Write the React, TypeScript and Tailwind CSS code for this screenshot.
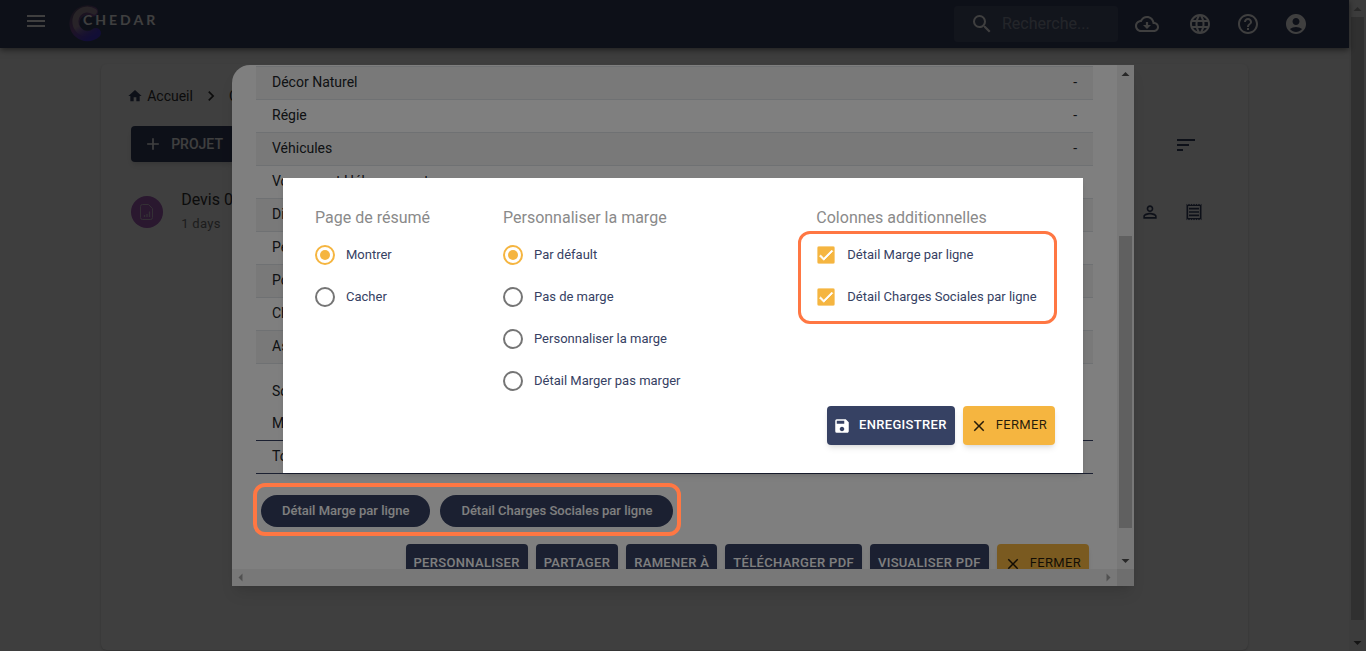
import { useState } from 'react';
import type { ReactNode } from 'react';
import {
  MdAccountCircle,
  MdAdd,
  MdCheck,
  MdChevronRight,
  MdClose,
  MdHelpOutline,
  MdHome,
  MdLanguage,
  MdMenu,
  MdOutlineReceipt,
  MdPersonOutline,
  MdSave,
  MdSearch,
  MdSort,
} from 'react-icons/md';

const rows = [
  'Décor Naturel',
  'Régie',
  'Véhicules',
  'Voyages et Hébergements',
  'Divers',
  'Personnel',
  'Postproduction',
  'Charges',
  'Assurances',
];

const actions = ['PERSONNALISER', 'PARTAGER', 'RAMENER À', 'TÉLÉCHARGER PDF', 'VISUALISER PDF'];

const summaryOptions = ['Montrer', 'Cacher'];
const marginOptions = ['Par défault', 'Pas de marge', 'Personnaliser la marge', 'Détail Marger pas marger'];
const columnOptions = ['Détail Marge par ligne', 'Détail Charges Sociales par ligne'];

function Logo() {
  return (
    <a href="#" className="flex items-center">
      <svg width="40" height="40" viewBox="0 0 40 40" fill="none" strokeLinecap="round" aria-hidden="true">
        <defs>
          <linearGradient id="ring" x1="0.2" y1="0" x2="0.8" y2="1">
            <stop offset="0" stopColor="#5c4c70" />
            <stop offset="0.45" stopColor="#7d4f96" />
            <stop offset="1" stopColor="#4a38d8" />
          </linearGradient>
          <linearGradient id="ringInner" x1="0.3" y1="0" x2="0.8" y2="1">
            <stop offset="0" stopColor="#a0929c" />
            <stop offset="0.5" stopColor="#a08ca4" />
            <stop offset="1" stopColor="#5a48d0" stopOpacity="0.2" />
          </linearGradient>
        </defs>
        <path d="M29 9.500A13 13 0 1 0 32 31" stroke="url(#ring)" strokeWidth="10" />
        <path d="M30 9.500A12 12 0 1 0 30 29.500" stroke="url(#ringInner)" strokeWidth="6" />
      </svg>
      <span className="-mt-1 -ml-[21px] font-[Lato,sans-serif] text-sm font-bold tracking-[3px] text-white">CHEDAR</span>
    </a>
  );
}

function CloudDownloadIcon() {
  return (
    <svg width="24" height="24" viewBox="0 0 24 24" fill="currentColor" aria-hidden="true">
      <path d="M19.35 10.04C18.67 6.59 15.64 4 12 4 9.11 4 6.6 5.64 5.35 8.04 2.34 8.36 0 10.91 0 14c0 3.31 2.69 6 6 6h13c2.76 0 5-2.24 5-5 0-2.64-2.05-4.78-4.65-4.96zM19 18H6c-2.21 0-4-1.79-4-4 0-2.05 1.53-3.76 3.56-3.97l1.07-.11.5-.95C8.08 7.14 9.94 6 12 6c2.62 0 4.88 1.86 5.39 4.43l.3 1.5 1.53.11c1.56.1 2.78 1.41 2.78 2.96 0 1.65-1.35 3-3 3z" />
      <path d="M10.9 10h2.2v3H16l-4 4-4-4h2.900z" />
    </svg>
  );
}

function DocumentIcon() {
  return (
    <svg width="18" height="18" viewBox="0 0 18 18" fill="none" stroke="#d0c0d4" aria-hidden="true">
      <path d="M4.5 1.5h6l4 4v9a2 2 0 0 1-2 2h-8a2 2 0 0 1-2-2v-11a2 2 0 0 1 2-2z" />
      <path d="M6.5 14v-2M9 14v-3M11.500 14V8.500" strokeWidth="1.300" />
    </svg>
  );
}

function Arrow({ className, points }: { className: string; points: string }) {
  return (
    <svg className={className} width="17" height="17" viewBox="0 0 17 17" fill="currentColor" aria-hidden="true">
      <polygon points={points} />
    </svg>
  );
}

const UP = '4.5,11 12.5,11 8.5,7';
const DOWN = '4.5,7 12.5,7 8.5,11';
const LEFT = '10.5,4.5 10.5,12.5 6.500,8.500';
const RIGHT = '6.500,4.5 6.500,12.5 10.5,8.500';

function IconButton({ label, className = '', children }: { label: string; className?: string; children: ReactNode }) {
  return (
    <button type="button" aria-label={label} className={className}>
      {children}
    </button>
  );
}

function Header() {
  return (
    <header className="relative flex h-12 items-center bg-[#364163] pl-6 text-white shadow-[0_2px_6px_rgba(0,0,0,0.5)]">
      <IconButton label="Menu" className="-mt-1.5">
        <MdMenu size={24} />
      </IconButton>
      <div className="-mt-1 ml-4 flex-1">
        <Logo />
      </div>
      <label className="flex h-9 w-[164px] items-center gap-2 rounded bg-white/10 pl-4">
        <MdSearch size={24} className="shrink-0" />
        <input
          type="search"
          aria-label="Recherche"
          placeholder="Recherche..."
          className="w-full min-w-0 bg-transparent text-base outline-none placeholder:text-white/40"
        />
      </label>
      <div className="ml-[17px] mr-[41px] flex items-center gap-6">
        <IconButton label="Télécharger" className="mr-[5px]">
          <CloudDownloadIcon />
        </IconButton>
        <IconButton label="Langue">
          <MdLanguage size={24} />
        </IconButton>
        <IconButton label="Aide">
          <MdHelpOutline size={24} />
        </IconButton>
        <IconButton label="Compte">
          <MdAccountCircle size={24} />
        </IconButton>
      </div>
    </header>
  );
}

function ProjectPage() {
  return (
    <div className="flex min-w-0 flex-1 flex-col bg-[#f8f8f8]">
      <Header />
      <main className="mx-auto mb-px mt-4 w-[85%] flex-1 rounded-md bg-[#fdfdfd] px-[26px] shadow-[0_1px_2px_rgba(0,0,0,0.2)]">
        <nav className="flex h-16 items-center text-sm text-[#333]">
          <a href="#" className="flex items-center gap-1">
            <MdHome size={16} className="text-[#364163]" />
            Accueil
          </a>
          <MdChevronRight size={20} className="mx-2" />
          <a href="#">Chedar</a>
        </nav>
        <div className="flex items-center justify-between pl-1 pr-6">
          <button
            type="button"
            className="-mt-0.5 flex h-9 items-center gap-2 rounded bg-[#364163] px-3 text-sm font-medium text-white shadow-md"
          >
            <MdAdd size={20} />
            PROJET
          </button>
          <IconButton label="Trier" className="text-[#364163]">
            <MdSort size={24} />
          </IconButton>
        </div>
        <div className="mt-[26px] flex items-center pl-1 pr-3.5">
          <span className="flex size-8 items-center justify-center rounded-full bg-[#a860bc]">
            <DocumentIcon />
          </span>
          <div className="ml-[18px] flex-1">
            <p className="text-base leading-6 text-[#333]">Devis 001</p>
            <p className="text-[13px] leading-6 tracking-wide text-[#777]">1 days</p>
          </div>
          <div className="flex gap-6 text-[#364163]">
            <IconButton label="Utilisateur">
              <MdPersonOutline size={20} />
            </IconButton>
            <IconButton label="Reçu" className="mr-1">
              <MdOutlineReceipt size={20} />
            </IconButton>
          </div>
        </div>
      </main>
    </div>
  );
}

function PageScrollbar() {
  return (
    <div className="flex w-[17px] flex-col items-center bg-[#f1f1f1]">
      <Arrow className="text-[#a3a3a3]" points={UP} />
      <div className="w-[13px] flex-1 bg-[#c1c1c1]" />
      <div className="h-3.5" />
      <Arrow className="text-[#505050]" points={DOWN} />
    </div>
  );
}

function Highlight({ className }: { className: string }) {
  return <span aria-hidden="true" className={'pointer-events-none absolute z-30 rounded-xl border-[#ff7743] ' + className} />;
}

function CloseButton() {
  return (
    <button
      type="button"
      className="flex h-[39px] items-center gap-2 rounded bg-[#f5b540] pb-0.5 pl-[7px] pr-2 text-[13px] tracking-wide text-black/85 shadow-md"
    >
      <MdClose size={18} className="mt-0.5" />
      FERMER
    </button>
  );
}

function QuoteDialog() {
  return (
    <div
      role="dialog"
      aria-label="Résumé du devis"
      className="grid h-[80vh] w-full max-w-[902px] grid-cols-[minmax(0,1fr)_17px] grid-rows-[minmax(0,1fr)_17px] rounded-tl-[18px] bg-white shadow-lg"
    >
      <div className="overflow-hidden px-6 pt-px">
        <table className="w-full border-separate border-spacing-0 text-sm text-[#212529]">
          <tbody>
            {rows.map((row) => (
              <tr key={row} className="odd:bg-[#f2f2f2]">
                <td className="h-[33px] border-t border-[#dee2e6] px-4 pb-0.5">{row}</td>
                <td className="h-[33px] border-t border-[#dee2e6] px-4 pb-0.5 text-right">-</td>
              </tr>
            ))}
            <tr>
              <td className="h-11 border-t border-[#dee2e6] px-4 pb-0.5 pt-3">Sous-total</td>
              <td className="h-11 border-t border-[#dee2e6] px-4 pb-0.5 pt-3 text-right">-</td>
            </tr>
            <tr>
              <td className="h-[33px] px-4 pb-0.5">Marge</td>
              <td className="h-[33px] px-4 pb-0.5 text-right">-</td>
            </tr>
            <tr>
              <td className="h-[34px] border-y border-[#364163] px-4 pb-0.5">Total</td>
              <td className="h-[34px] border-y border-[#364163] px-4 pb-0.5 text-right">-</td>
            </tr>
          </tbody>
        </table>
        <div className="relative ml-[5px] mt-[21px] flex w-fit gap-2.5">
          {columnOptions.map((option) => (
            <button
              key={option}
              type="button"
              className="h-8 rounded-full bg-[#364163] px-[21px] text-[13px] font-medium text-white"
            >
              {option}
            </button>
          ))}
          <Highlight className="-bottom-[9px] -left-2 -right-2 -top-3 border-4" />
        </div>
        <div className="mr-1 mt-[17px] flex justify-end gap-2">
          {actions.map((action) => (
            <button
              key={action}
              type="button"
              className="h-[39px] rounded bg-[#364163] px-2 pb-0.5 text-[13px] font-medium tracking-wide text-white shadow-md"
            >
              {action}
            </button>
          ))}
          <CloseButton />
        </div>
      </div>
      <div className="flex flex-col items-center bg-[#f1f1f1]">
        <Arrow className="text-[#505050]" points={UP} />
        <div className="h-[154px]" />
        <div className="w-[13px] flex-1 bg-[#c1c1c1]" />
        <div className="h-6" />
        <Arrow className="text-[#505050]" points={DOWN} />
      </div>
      <div className="flex justify-between bg-[#f1f1f1]">
        <Arrow className="text-[#a3a3a3]" points={LEFT} />
        <Arrow className="text-[#a3a3a3]" points={RIGHT} />
      </div>
      <div className="bg-[#dcdcdc]" />
    </div>
  );
}

function RadioGroup({ name, legend, options, className }: { name: string; legend: string; options: string[]; className: string }) {
  const [selected, setSelected] = useState(options[0]);

  return (
    <fieldset className={className}>
      <legend className="mb-[15px] text-base leading-6 text-[#8a8a8a]">{legend}</legend>
      <div className="flex flex-col gap-[22px]">
        {options.map((option) => (
          <label key={option} className="flex h-5 items-center gap-[11px] text-[13px] text-[#364163]">
            <input
              type="radio"
              name={name}
              checked={selected === option}
              onChange={() => setSelected(option)}
              className="grid size-5 shrink-0 appearance-none place-items-center rounded-full border-2 border-[#757575] before:size-2.5 before:rounded-full checked:border-[#f5b540] checked:before:bg-[#f5b540]"
            />
            {option}
          </label>
        ))}
      </div>
    </fieldset>
  );
}

function CustomizeDialog() {
  const [columns, setColumns] = useState(columnOptions);

  const toggle = (option: string) =>
    setColumns(columns.includes(option) ? columns.filter((c) => c !== option) : [...columns, option]);

  return (
    <div role="dialog" aria-label="Personnaliser" className="w-full max-w-[800px] bg-white pb-7 pl-8 pr-4 pt-7 shadow-md">
      <div className="grid grid-cols-12">
        <RadioGroup name="summary" legend="Page de résumé" options={summaryOptions} className="col-span-3" />
        <RadioGroup name="margin" legend="Personnaliser la marge" options={marginOptions} className="col-span-5" />
        <fieldset className="col-span-4">
          <legend className="mb-[15px] text-base leading-6 text-[#8a8a8a]">Colonnes additionnelles</legend>
          <div className="relative ml-px mr-7 flex flex-col gap-[22px]">
            {columnOptions.map((option) => (
              <label key={option} className="flex h-5 items-center gap-3 text-[13px] text-[#364163]">
                <span className="grid shrink-0 place-items-center">
                  <input
                    type="checkbox"
                    checked={columns.includes(option)}
                    onChange={() => toggle(option)}
                    className="col-start-1 row-start-1 size-[18px] appearance-none rounded-xs border-2 border-[#757575] checked:border-[#f5b540] checked:bg-[#f5b540]"
                  />
                  <MdCheck
                    size={18}
                    className="pointer-events-none col-start-1 row-start-1 stroke-current stroke-1 text-white"
                  />
                </span>
                {option}
              </label>
            ))}
            <Highlight className="-bottom-[17px] -left-[19px] -right-[18px] -top-3.5 border-3" />
          </div>
        </fieldset>
      </div>
      <div className="mr-3 mt-[15px] flex justify-end gap-2">
        <button
          type="button"
          className="flex h-[39px] items-center gap-2 rounded bg-[#364163] pb-0.5 pl-1.5 pr-2 text-[13px] font-medium tracking-wide text-white shadow-md"
        >
          <MdSave size={18} className="mt-0.5" />
          ENREGISTRER
        </button>
        <CloseButton />
      </div>
    </div>
  );
}

export default function App() {
  return (
    <div className="relative h-screen overflow-hidden font-[Roboto,sans-serif]">
      <div className="flex h-full">
        <ProjectPage />
        <PageScrollbar />
      </div>
      <div className="absolute inset-0 bg-black/50" />
      <div className="absolute inset-0 flex items-center justify-center">
        <QuoteDialog />
      </div>
      <div className="absolute inset-0 z-10 bg-black/50" />
      <div className="absolute inset-0 z-20 flex items-center justify-center">
        <CustomizeDialog />
      </div>
    </div>
  );
}
